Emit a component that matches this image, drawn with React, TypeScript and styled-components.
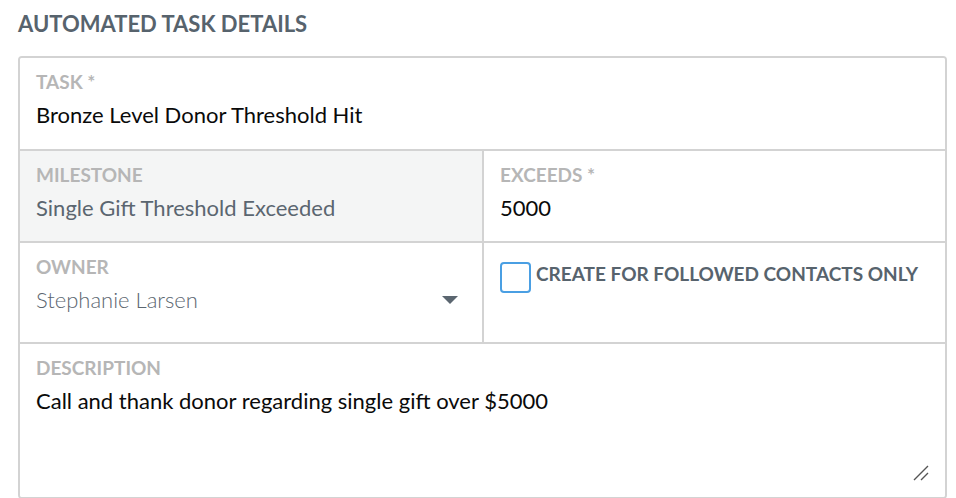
import React from 'react';
import styled, { createGlobalStyle } from 'styled-components';

const GlobalStyle = createGlobalStyle`
  body {
    margin: 0;
    background: #ffffff;
    font-family: Lato, "Open Sans", sans-serif;
  }
`;

const Page = styled.div`
  padding: 8px 9px 0 18px;
`;

const Heading = styled.h2`
  margin: 0 0 16px 0;
  font-size: 22px;
  line-height: 32px;
  font-weight: 700;
  color: #57636d;
`;

const Card = styled.div`
  border: 2px solid #d3d3d3;
  border-radius: 4px;
  display: grid;
  grid-template-columns: 464px 1fr;
  overflow: hidden;
`;

const Cell = styled.div<{ $span?: boolean; $muted?: boolean; $h: number; $last?: boolean; $left?: boolean }>`
  grid-column: ${(p) => (p.$span ? '1 / span 2' : 'auto')};
  height: ${(p) => p.$h}px;
  box-sizing: border-box;
  padding: 13px 16px 0 16px;
  background: ${(p) => (p.$muted ? '#f4f5f5' : '#ffffff')};
  border-bottom: ${(p) => (p.$last ? 'none' : '2px solid #d3d3d3')};
  border-right: ${(p) => (p.$left ? '2px solid #d3d3d3' : 'none')};
  position: relative;
`;

const Label = styled.div`
  font-size: 19px;
  line-height: 22px;
  font-weight: 700;
  color: #b6b6b6;
  text-transform: uppercase;
`;

const Value = styled.div<{ $tone?: 'dark' | 'muted' | 'light' }>`
  margin-top: 9px;
  font-size: 22px;
  line-height: 26px;
  font-weight: ${(p) => (p.$tone === 'light' ? 300 : 400)};
  color: ${(p) => (p.$tone === 'dark' || !p.$tone ? '#0a0a0a' : '#5b6670')};
`;

const SelectRow = styled.div`
  display: flex;
  align-items: center;
  justify-content: space-between;
  padding-right: 8px;
`;

const Caret = styled.span`
  width: 0;
  height: 0;
  border-left: 8px solid transparent;
  border-right: 8px solid transparent;
  border-top: 8px solid #5b6670;
  margin-top: 8px;
`;

const CheckRow = styled.label`
  display: flex;
  align-items: flex-start;
  gap: 5px;
  padding-top: 6px;
`;

const Box = styled.span`
  width: 31px;
  height: 31px;
  box-sizing: border-box;
  border: 2px solid #4a9fe3;
  border-radius: 4px;
  flex: none;
`;

const CheckText = styled.span`
  font-size: 19px;
  line-height: 22px;
  font-weight: 700;
  color: #57636d;
  padding-top: 1px;
`;

const Grip = styled.svg`
  position: absolute;
  right: 16px;
  bottom: 16px;
`;

export default function App() {
  return (
    <>
      <GlobalStyle />
      <Page>
        <Heading>AUTOMATED TASK DETAILS</Heading>
        <Card>
          <Cell $span $h={93}>
            <Label>Task *</Label>
            <Value>Bronze Level Donor Threshold Hit</Value>
          </Cell>
          <Cell $muted $left $h={92}>
            <Label>Milestone</Label>
            <Value $tone="muted">Single Gift Threshold Exceeded</Value>
          </Cell>
          <Cell $h={92}>
            <Label>Exceeds *</Label>
            <Value>5000</Value>
          </Cell>
          <Cell $left $h={101}>
            <Label>Owner</Label>
            <SelectRow>
              <Value $tone="light">Stephanie Larsen</Value>
              <Caret />
            </SelectRow>
          </Cell>
          <Cell $h={101}>
            <CheckRow>
              <Box />
              <CheckText>CREATE FOR FOLLOWED CONTACTS ONLY</CheckText>
            </CheckRow>
          </Cell>
          <Cell $span $last $h={153}>
            <Label>Description</Label>
            <Value>Call and thank donor regarding single gift over $5000</Value>
            <Grip width="16" height="16" viewBox="0 0 16 16">
              <path d="M1 15 L15 1 M8 15 L15 8" stroke="#555" strokeWidth="1.4" fill="none" />
            </Grip>
          </Cell>
        </Card>
      </Page>
    </>
  );
}
